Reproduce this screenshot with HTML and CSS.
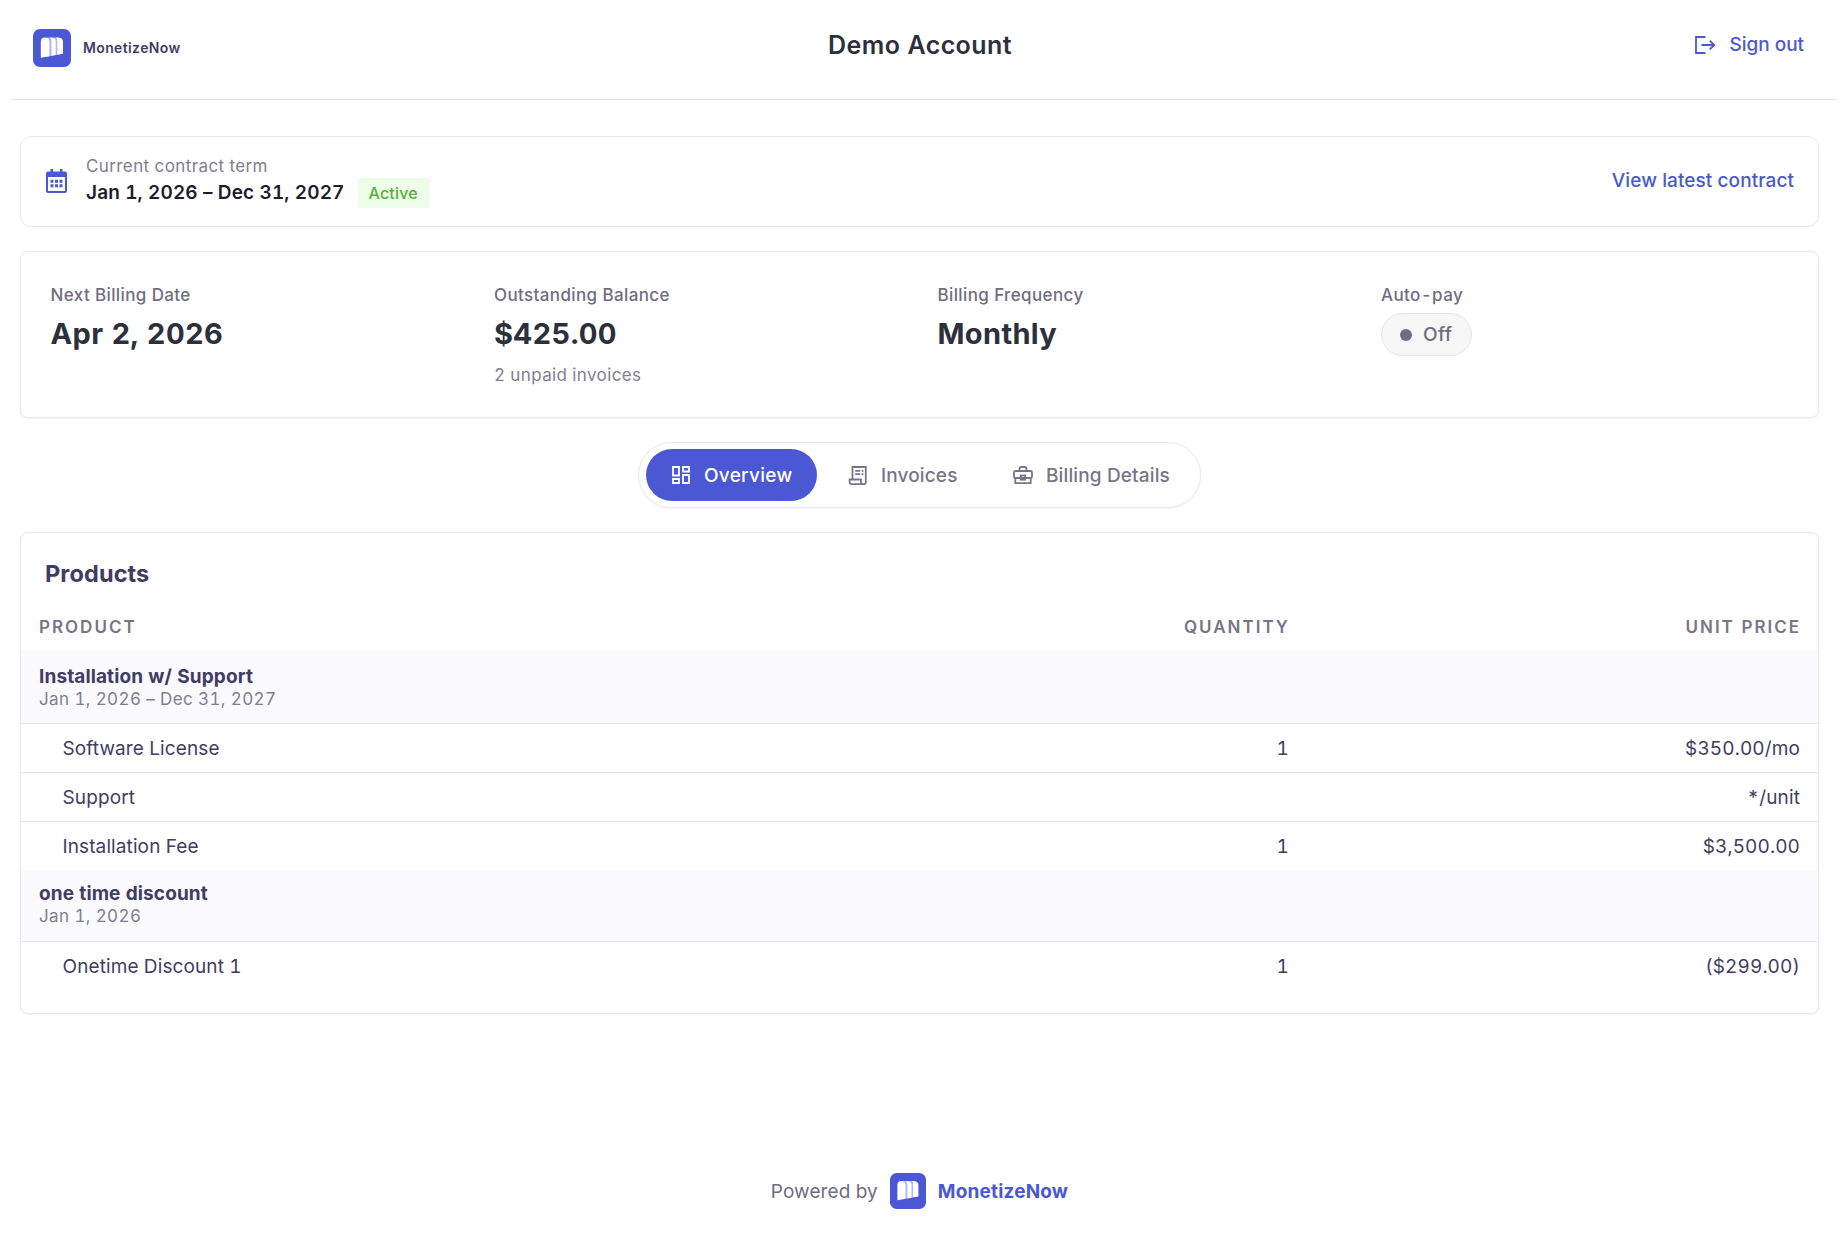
FILE: index.html
```html
<!DOCTYPE html>
<html lang="en">
<head>
<meta charset="utf-8">
<title>Demo Account</title>
<link rel="stylesheet" href="styles.css">
</head>
<body>
<svg class="defs" aria-hidden="true">
  <symbol id="logo" viewBox="0 0 38 38">
    <rect width="38" height="38" rx="7" fill="#4a58d3"/>
    <path d="M14 8.500h11q4.500 0 4.500 4v12.300L14 27.800z" fill="#b4baee"/>
    <path d="M7.800 12.500q0-4 4.200-4t4.300 4v14.800L7.800 28.700zM17 8.500q5.700 0 5.700 4v13.600l-4.200.7V12.500q0-2.800-1.500-4zM23.300 8.500q6.700 0 6.700 4v12.200l-5.600 1V12.500q0-2.800-1.100-4z" fill="#fff"/>
  </symbol>
</svg>
<header class="header">
  <div class="brand"><svg class="brand-logo"><use href="#logo"/></svg><span class="brand-name">MonetizeNow</span></div>
  <h1 class="account">Demo Account</h1>
  <a class="signout">
    <svg class="signout-icon" viewBox="0 0 20 18" fill="none" stroke="currentColor" stroke-width="1.800"><path d="M10.500 1H1v16h9.500M6.500 9H19M14.800 4.600 19.200 9l-4.400 4.400"/></svg>
    <span>Sign out</span>
  </a>
</header>
<main class="main">
  <section class="card contract">
    <svg class="calendar" viewBox="0 0 21 24" fill="#4a58d3"><path fill-rule="evenodd" d="M4.500 0h2.600v2.600h6.800V0h2.600v2.600H19a2 2 0 0 1 2 2V22a2 2 0 0 1-2 2H2a2 2 0 0 1-2-2V4.600a2 2 0 0 1 2-2h2.500zM2 8v13.900h17V8z"/><path d="M4.500 10.700h3v3h-3zM9 10.700h3v3H9zM13.500 10.700h3v3h-3zM4.500 15.300h3v3h-3zM9 15.300h3v3H9zM13.500 15.300h3v3h-3z"/></svg>
    <div class="term">
      <div class="term-label">Current contract term</div>
      <div class="term-row"><span class="term-dates">Jan 1, 2026 – Dec 31, 2027</span><span class="tag">Active</span></div>
    </div>
    <a class="view-link">View latest contract</a>
  </section>
  <section class="card stats">
    <div class="stat"><div class="stat-label">Next Billing Date</div><div class="stat-value">Apr 2, 2026</div></div>
    <div class="stat"><div class="stat-label">Outstanding Balance</div><div class="stat-value">$425.00</div><div class="stat-note">2 unpaid invoices</div></div>
    <div class="stat"><div class="stat-label">Billing Frequency</div><div class="stat-value">Monthly</div></div>
    <div class="stat"><div class="stat-label">Auto-pay</div><div class="pill"><i class="dot"></i><span>Off</span></div></div>
  </section>
  <nav class="tabs">
    <a class="tab tab-active">
      <svg class="ico" viewBox="0 0 20 20" fill="none" stroke="currentColor" stroke-width="1.800"><path d="M2 2h6v8.500H2zM12 2h6v4.500h-6zM2 14h6v4H2zM12 10h6v8h-6z"/></svg>
      <span>Overview</span>
    </a>
    <a class="tab">
      <svg class="ico" viewBox="0 0 20 20" fill="none" stroke="currentColor" stroke-width="1.800"><path d="M4.500 14.300V2h13.300v14.900a2.200 2.200 0 0 1-2.200 2.200H4a2.400 2.400 0 0 1-2.400-2.400v-2.200h11.300v2.300a2.200 2.200 0 0 0 2.200 2.200M7.200 5.800h5M7.200 9.200h5M13.600 5.800h1.800M13.600 9.200h1.800"/></svg>
      <span>Invoices</span>
    </a>
    <a class="tab">
      <svg class="ico" viewBox="0 0 20 20" fill="none" stroke="currentColor" stroke-width="1.800"><rect x="1" y="6" width="18" height="7" rx="1.500"/><path d="M2.300 13v5.200h15.400V13M6.500 6V4q0-2 2-2h3q2 0 2 2v2"/><rect x="7.800" y="10.500" width="4.400" height="4.200"/></svg>
      <span>Billing Details</span>
    </a>
  </nav>
  <section class="card products">
    <h2 class="products-title">Products</h2>
    <div class="row head"><span>PRODUCT</span><span class="num">QUANTITY</span><span class="num">UNIT PRICE</span></div>
    <div class="group first"><div class="group-name">Installation w/ Support</div><div class="group-date">Jan 1, 2026 – Dec 31, 2027</div></div>
    <div class="row"><span class="name">Software License</span><span class="num">1</span><span class="num">$350.00/mo</span></div>
    <div class="row"><span class="name">Support</span><span class="num"></span><span class="num">*/unit</span></div>
    <div class="row last"><span class="name">Installation Fee</span><span class="num">1</span><span class="num">$3,500.00</span></div>
    <div class="group"><div class="group-name">one time discount</div><div class="group-date">Jan 1, 2026</div></div>
    <div class="row last"><span class="name">Onetime Discount 1</span><span class="num">1</span><span class="num">($299.00)</span></div>
  </section>
</main>
<footer class="footer"><span class="powered">Powered by</span><svg class="footer-logo"><use href="#logo"/></svg><span class="footer-name">MonetizeNow</span></footer>
</body>
</html>
```
FILE: styles.css
```css
* { box-sizing: border-box; }
body { margin: 0; background: #fff; font-family: Inter, sans-serif; font-size: 19px; letter-spacing: .11px; font-variant-numeric: tabular-nums; color: #3f3d63; min-height: 1254px; }
h1, h2 { margin: 0; }
.defs { position: absolute; width: 0; height: 0; }
.header { margin: 0 5px 0 11px; height: 100px; border-bottom: 1px solid #e4e4e8; padding: 0 33px 0 22px; display: grid; grid-template-columns: 1fr auto 1fr; align-items: start; }
.brand { display: flex; align-items: center; gap: 12px; padding-top: 28.5px; }
.brand-logo { width: 38px; height: 38px; }
.brand-name { font-size: 14px; font-weight: 600; margin-top: -1px; letter-spacing: .37px; }
.account { font-size: 25px; font-weight: 600; line-height: 30px; padding: 30px 0 0 3px; color: #2b303c; letter-spacing: .42px; }
.signout { justify-self: end; display: flex; align-items: center; gap: 15px; padding-top: 33px; line-height: 24px; color: #4a58d3; font-weight: 500; letter-spacing: -.04px; }
.signout-icon { width: 20px; height: 18px; }
.main { padding: 36px 23px 0 20px; display: flex; flex-direction: column; }
.card { border: 1px solid #e6e9f0; border-radius: 8px; background: #fff; }
.contract { height: 91px; border-radius: 11px; display: flex; align-items: center; padding: 0 24px 2px 25px; }
.calendar { width: 21px; height: 24px; }
.term { margin-left: 19px; height: 56px; flex: 1; }
.term-label { font-size: 17px; line-height: 26px; color: #807e90; letter-spacing: .4px; }
.term-row { display: flex; align-items: center; height: 28px; gap: 13px; }
.term-dates { font-weight: 600; color: #1d1c2b; letter-spacing: .13px; }
.tag { background: #edfde7; color: #55b23a; font-size: 16px; font-weight: 500; height: 30px; line-height: 30px; padding: 0 12px 0 11px; border-radius: 2px; letter-spacing: .18px; }
.view-link { color: #4a58d3; font-weight: 500; letter-spacing: .08px; }
.stats { margin-top: 24px; height: 167px; display: grid; grid-template-columns: repeat(4, 443.5px); padding: 31px 0 0 29.5px; box-shadow: 0 1px 2px rgba(40, 50, 90, .06); }
.stat-label { font-size: 17px; font-weight: 500; line-height: 24px; color: #6f6d80; letter-spacing: .38px; }
.stat-value { font-size: 29px; font-weight: 700; line-height: 36px; margin-top: 9px; color: #2b303c; letter-spacing: .35px; }
.stat-note { font-size: 17px; line-height: 24px; margin-top: 11px; color: #807e90; letter-spacing: .38px; }
.pill { margin-top: 6px; width: 91px; height: 43px; border: 1px solid #e4e6ec; border-radius: 22px; background: #f6f6f7; display: flex; align-items: center; gap: 11px; padding-left: 18px; font-weight: 500; color: #6f6d80; letter-spacing: .4px; }
.dot { width: 12px; height: 12px; border-radius: 50%; background: #6f6d80; }
.tabs { align-self: center; margin: 24px 0; width: 563px; height: 66px; border: 1px solid #e6e9f0; border-radius: 34px; padding: 6px 6px 6px 7px; display: flex; gap: 6px; box-shadow: 0 1px 2px rgba(40, 50, 90, .06); }
.tab { flex: none; white-space: nowrap; height: 52px; border-radius: 26px; display: flex; align-items: center; gap: 13px; padding: 0 24.5px 0 25px; font-weight: 500; color: #777587; letter-spacing: .13px; }
.tab-active { background: #4a58d3; color: #fff; letter-spacing: .28px; }
.ico { width: 20px; height: 20px; }
.products { height: 482px; box-shadow: 0 1px 2px rgba(40, 50, 90, .06); }
.products-title { height: 69px; padding: 26px 0 0 24px; font-size: 23.5px; line-height: 30px; font-weight: 700; }
.row { display: grid; grid-template-columns: 800px 1fr 511px; align-items: center; height: 49px; padding: 0 18px; border-bottom: 1px solid #e3e4ea; }
.head { border: 0; font-size: 17px; font-weight: 600; color: #777587; letter-spacing: 2px; }
.head .num { margin-right: -1px; }
.last { border: 0; height: 48px; }
.num { text-align: right; }
.name { padding-left: 23.5px; }
.group { background: #fafaff; border-bottom: 1px solid #e3e7ee; height: 72px; padding: 12px 18px 0; line-height: 23px; }
.first { border-top: 1px solid #f5f5f9; height: 73px; padding-top: 13px; }
.group-name { font-weight: 700; }
.group-date { font-size: 17px; color: #807e90; letter-spacing: .38px; }
.footer { margin-top: 159px; padding-right: 3px; display: flex; align-items: center; justify-content: center; height: 36px; }
.powered { color: #6f6d80; }
.footer-logo { width: 36px; height: 36px; margin: 0 12px; }
.footer-name { color: #4a58d3; font-weight: 700; letter-spacing: .17px; }
```
